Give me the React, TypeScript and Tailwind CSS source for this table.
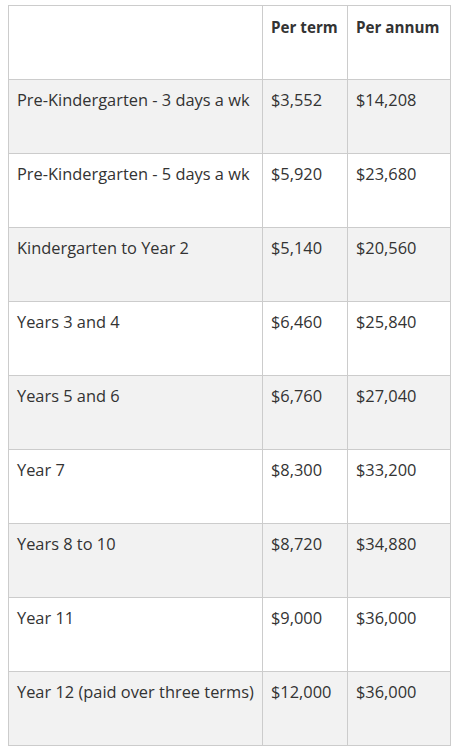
const rows = [
  ["Pre-Kindergarten - 3 days a wk", "$3,552", "$14,208"],
  ["Pre-Kindergarten - 5 days a wk", "$5,920", "$23,680"],
  ["Kindergarten to Year 2", "$5,140", "$20,560"],
  ["Years 3 and 4", "$6,460", "$25,840"],
  ["Years 5 and 6", "$6,760", "$27,040"],
  ["Year 7", "$8,300", "$33,200"],
  ["Years 8 to 10", "$8,720", "$34,880"],
  ["Year 11", "$9,000", "$36,000"],
  ["Year 12 (paid over three terms)", "$12,000", "$36,000"],
];

export default function App() {
  return (
    <div className="bg-white min-h-[749px] pt-[5px] pl-[8px] font-['Open_Sans',sans-serif] text-[#333] text-[16.4px]">
      <table className="border-collapse table-fixed w-[442px]">
        <colgroup>
          <col className="w-[254px]" />
          <col className="w-[85px]" />
          <col className="w-[103px]" />
        </colgroup>
        <thead>
          <tr className="h-[74px]">
            <th className="border border-[#ccc] p-2 align-top"></th>
            <th className="border border-[#ccc] px-2 pt-[10px] align-top text-left font-bold text-[15.2px]">Per term</th>
            <th className="border border-[#ccc] px-2 pt-[10px] align-top text-left font-bold text-[15.2px]">Per annum</th>
          </tr>
        </thead>
        <tbody>
          {rows.map((r, i) => (
            <tr key={i} className={i % 2 === 0 ? "h-[74px] bg-[#f2f2f2]" : "h-[74px] bg-white"}>
              {r.map((c, j) => (
                <td key={j} className="border border-[#ccc] px-2 pt-[8px] align-top whitespace-nowrap leading-6">
                  {c}
                </td>
              ))}
            </tr>
          ))}
        </tbody>
      </table>
    </div>
  );
}
